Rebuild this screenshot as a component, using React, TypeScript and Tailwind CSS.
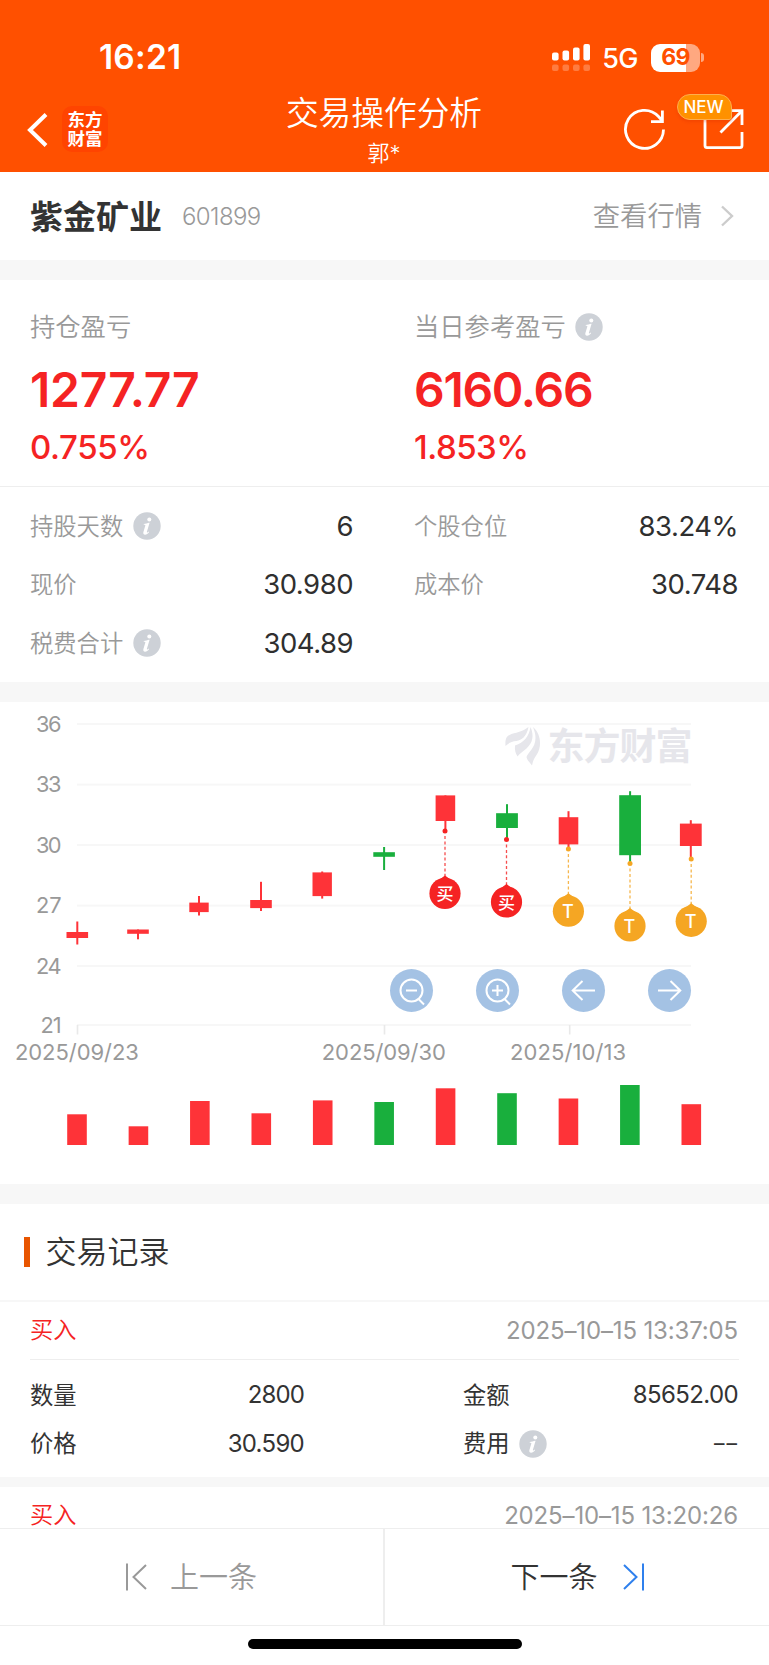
import type { ReactNode } from 'react';

const RED = '#fe3338';
const GREEN = '#19af3d';

type Candle = { x: number; w: number; hi: number; lo: number; top: number; bot: number; up: boolean; vol: number };

const candles: Candle[] = [
  { x: 77.3, w: 21.6, hi: 921.5, lo: 944.5, top: 932, bot: 938, up: true, vol: 1114.3 },
  { x: 138, w: 21.6, hi: 929.5, lo: 939.3, top: 929.5, bot: 933.8, up: true, vol: 1126.3 },
  { x: 199, w: 19.4, hi: 896, lo: 915.5, top: 902.6, bot: 912.1, up: true, vol: 1101 },
  { x: 261, w: 21.6, hi: 881.8, lo: 911, top: 900, bot: 908.1, up: true, vol: 1113.3 },
  { x: 322.2, w: 19.4, hi: 871.5, lo: 898.6, top: 872.4, bot: 896.1, up: true, vol: 1100.4 },
  { x: 384.1, w: 21.6, hi: 847, lo: 870, top: 852.2, bot: 856.8, up: false, vol: 1102 },
  { x: 445.4, w: 19.6, hi: 795.4, lo: 830, top: 795.4, bot: 821, up: true, vol: 1088.3 },
  { x: 507, w: 21.8, hi: 804.2, lo: 838, top: 813.2, bot: 828, up: false, vol: 1093.2 },
  { x: 568.5, w: 19.6, hi: 811.2, lo: 847, top: 817.2, bot: 844.4, up: true, vol: 1098.5 },
  { x: 630.1, w: 21.8, hi: 791.2, lo: 862, top: 795.2, bot: 855.2, up: false, vol: 1085 },
  { x: 690.8, w: 21.8, hi: 820.2, lo: 857, top: 823.6, bot: 846, up: true, vol: 1104.2 },
];

const grid: [string, number][] = [['36', 724], ['33', 784.6], ['30', 845], ['27', 905.6], ['24', 966], ['21', 1025]];
const dates: [string, number, number, number][] = [
  ['2025/09/23', 76.9, 77.5, 124],
  ['2025/09/30', 383.8, 384.5, 124],
  ['2025/10/13', 568, 569.7, 116],
];
const pins: [string, number, number, number][] = [
  ['买', 445, 831, 893.4],
  ['买', 506.5, 839.5, 902],
  ['T', 568.4, 849, 911.2],
  ['T', 630, 863.6, 926],
  ['T', 691.2, 859, 921.3],
];

function Info() {
  return (
    <svg className="size-[28px] shrink-0" viewBox="0 0 28 28">
      <circle cx="14" cy="14" r="13.7" fill="#cdd1d7" />
      <circle cx="16.300" cy="7.500" r="2" fill="#fff" />
      <path d="M10.800 12c1.900-.2 3.500-.7 5-1.200h.8l-2.700 9c-.2.900.2 1 .9.400l1-.8.400.500c-1.400 1.800-2.700 2.800-4.100 2.800-1.500 0-2.100-1-1.700-2.600l1.900-6.300c.2-.7-.1-1-1.600-1z" fill="#fff" />
    </svg>
  );
}

function Metric({ label, value, info }: { label: string; value: string; info?: boolean }) {
  return (
    <div className="flex h-full items-center pl-[30px] pr-[31px]">
      <span className="pt-[1px] text-[23.3px] font-[350] text-[#999]">{label}</span>
      {info && <span className="ml-[10px] flex"><Info /></span>}
      <span className="ml-auto pt-[1px] text-[27.5px] font-[380] tracking-[-0.500px] text-[#2f2f2f]">{value}</span>
    </div>
  );
}

function RoundButton({ children }: { children: ReactNode }) {
  return (
    <button className="size-[43px] rounded-full bg-[#a4c2e4]">
      <svg viewBox="0 0 43 43" className="size-[43px]" fill="none" stroke="#fff" strokeWidth="2">{children}</svg>
    </button>
  );
}

function RecordHead({ time }: { time: string }) {
  return (
    <div className="flex h-[57px] items-center justify-between">
      <span className="pt-[1px] text-[23.200px] font-[350] text-[#f52323]">买入</span>
      <span className="pr-[1px] pt-[1px] text-[24px] font-[380] tracking-[-0.150px] text-[#999]">{time}</span>
    </div>
  );
}

function Chart() {
  return (
    <div className="relative h-[482px]">
      <svg className="block h-[482px] w-[769px]" viewBox="0 702 769 482">
        {grid.map(([t, y]) => (
          <g key={t}>
            <rect x="77" y={y - 1} width="614" height="2" fill="#f7f7f7" />
            <text x="61.500" y={y + 7.8} textAnchor="end" fontSize="21.800" fontWeight="380" textLength={t === '21' ? 21 : 25.5} fill="#999">{t}</text>
          </g>
        ))}
        {dates.map(([t, x, tick, w]) => (
          <g key={t}>
            <rect x={tick - 0.8} y="1025" width="1.6" height="9.500" fill="#e9e9e9" />
            <text x={x} y="1060.200" textAnchor="middle" fontSize="22" fontWeight="380" textLength={w} fill="#999">{t}</text>
          </g>
        ))}
        <g fill="#e6e6eb">
          <path d="M505.500 746c-.5-8 1-10 6-12 7-2 12-3 17-7-2 10-7 13-12 14-5 .5-8 2-11 5z" />
          <path d="M517.500 756.500c-2-3-3-7-2.500-11 9-3 14-9 15.500-18.500 4 9 2 16-4 21.500-4 3.500-7 5-9 8z" />
          <path d="M532 765.500c-2-3-5-5-5.500-8.500 1-4 9-9 9-19 0-4-1-7-2.500-11 9 8 8.500 21 3.500 28-2.500 3.500-3.500 6-4.500 10.500z" />
          <text x="547.500" y="759.800" fontSize="37" fontWeight="700" textLength="145">东方财富</text>
        </g>
        {candles.map((c, i) => {
          const f = c.up ? RED : GREEN;
          return (
            <g key={i} fill={f}>
              <rect x={c.x - 1} y={c.hi} width="2" height={c.lo - c.hi} />
              <rect x={c.x - c.w / 2} y={c.top} width={c.w} height={c.bot - c.top} />
              <rect x={67.2 + i * 61.43} y={c.vol} width="19.600" height={1145 - c.vol} />
            </g>
          );
        })}
        {pins.map(([t, x, y, cy]) => {
          const f = t === 'T' ? '#f5a623' : '#f52323';
          return (
            <g key={x}>
              <circle cx={x} cy={y} r="2.500" fill={f} />
              <path d={`M${x} ${y + 5}V${cy - 17}`} stroke={f} strokeWidth="1.300" strokeDasharray="3 2.400" opacity=".8" />
              <path d={`M${x} ${cy - 18}q4 3.500 11 7h-22q7-3.500 11-7z`} fill={f} />
              <circle cx={x} cy={cy} r="15.600" fill={f} />
              <text x={x - (t === 'T' ? 0.6 : 0)} y={cy + (t === 'T' ? 6.8 : 6.8)} textAnchor="middle" fontSize={t === 'T' ? 18 : 17} fontWeight="500" fill="#fff">{t}</text>
            </g>
          );
        })}
      </svg>
      <div className="absolute left-[390px] top-[267px] flex gap-[43px]">
        <RoundButton><circle cx="21.500" cy="21.500" r="11" /><path d="M16 21.500h11M28.500 30l5.500 5.500" /></RoundButton>
        <RoundButton><circle cx="21.500" cy="21.500" r="11" /><path d="M16 21.500h11M21.500 16v11M28.500 30l5.500 5.500" /></RoundButton>
        <RoundButton><path d="M33 21.500H11M20.500 12l-9.800 9.500 9.800 9.500" /></RoundButton>
        <RoundButton><path d="M10 21.500h22M22.500 12l9.800 9.500-9.800 9.500" /></RoundButton>
      </div>
    </div>
  );
}

export default function App() {
  return (
    <div className="flex h-[1665px] w-[769px] flex-col overflow-hidden bg-white font-['Inter','Noto_Sans_CJK_SC',sans-serif] leading-none whitespace-nowrap">
      <header className="h-[172px] shrink-0 bg-[#ff5000] text-white">
        <div className="flex h-[86px] items-center pl-[99px] pr-[65px] pt-[29px]">
          <span className="text-[33.500px] font-semibold tracking-[0.200px]">16:21</span>
          <svg className="ml-auto h-[28px] w-[38px]" viewBox="0 0 38 28" fill="#fff">
            <rect y="8.500" width="6.600" height="8" rx="2" />
            <rect x="10.500" y="6.500" width="6.600" height="10" rx="2" />
            <rect x="21" y="3.500" width="6.600" height="13" rx="2" />
            <rect x="31.400" width="6.600" height="16.500" rx="2" />
            <g opacity=".25">
              <rect y="20.500" width="6.600" height="6.600" rx="2" />
              <rect x="10.500" y="20.500" width="6.600" height="6.600" rx="2" />
              <rect x="21" y="20.500" width="6.600" height="6.600" rx="2" />
              <rect x="31.400" y="20.500" width="6.600" height="6.600" rx="2" />
            </g>
          </svg>
          <span className="ml-[12px] pt-[2px] text-[27px] font-medium tracking-[-0.5px]">5G</span>
          <span className="ml-[13px] flex h-[28px] w-[49px] items-center justify-center rounded-[9px] bg-[linear-gradient(90deg,#fff_71%,#ffa880_71%)] text-[23px] font-bold tracking-[-0.800px] text-[#ff5000]">69</span>
          <span className="ml-[1px] h-[9px] w-[3px] rounded-r-full bg-[#ffa880]" />
        </div>
        <div className="flex h-[86px]">
          <div className="flex w-[256px] pl-[27px] pt-[20px]">
            <svg className="mt-[6px] h-[36px] w-[22px]" viewBox="0 0 22 36" fill="none" stroke="#fff" strokeWidth="4"><path d="M19 2.500 3 18l16 15.500" /></svg>
            <div className="ml-[13px] flex size-[46px] flex-col items-center justify-center gap-[1.500px] rounded-[10px] bg-[#ff4400] text-[17.500px] font-bold"><span>东方</span><span>财富</span></div>
          </div>
          <div className="flex w-[256px] flex-col items-center">
            <h1 className="mt-[11px] text-[32.700px] font-[350]">交易操作分析</h1>
            <span className="mt-[12px] text-[22px] font-[350]">郭*</span>
          </div>
          <div className="relative flex flex-1 pl-[110px] pt-[21px]">
            <svg className="h-[44px] w-[48px]" viewBox="0 0 48 44" fill="none" stroke="#fff" strokeWidth="2.800"><path d="M41.500 22.500A19 19 0 1 1 36.500 9.500L40 13.500M40.400 3.500v11.200H29" /></svg>
            <svg className="ml-[30px] h-[44px] w-[44px]" viewBox="0 0 44 44" fill="none" stroke="#fff" strokeWidth="2.800"><path d="M5 8v30.500q0 2.100 2 2.100h33q2 0 2-2.100V25M32 3.700h10V18M42 3.700 20.500 25.500" /></svg>
            <span className="absolute left-[165px] top-[8px] flex h-[25.500px] w-[55px] items-center justify-center rounded-[13px] rounded-br-[3px] border border-[#ffae4d] bg-[#ff9100] pr-[2px] pt-[2px] text-[17px] font-medium shadow-[0_2px_3px_rgba(220,50,0,0.300)]">NEW</span>
          </div>
        </div>
      </header>

      <div className="flex h-[88px] shrink-0 items-center pl-[30px] pr-[32px]">
        <span className="pt-[2px] text-[33px] font-bold text-[#333]">紫金矿业</span>
        <span className="ml-[20px] pt-[1px] text-[24px] font-light tracking-[-0.600px] text-[#999]">601899</span>
        <span className="ml-auto pt-[2px] text-[27.300px] font-[350] text-[#999]">查看行情</span>
        <svg className="ml-[17px] h-[24px] w-[18px]" viewBox="0 0 18 24" fill="none" stroke="#ccc" strokeWidth="2.400"><path d="M3 2.500 13 12 3 21.500" /></svg>
      </div>
      <div className="h-[20px] shrink-0 bg-[#f7f7f7]" />

      <section className="grid h-[207px] shrink-0 grid-cols-[384px_385px] border-b border-[#eee]">
        <div className="pl-[30px] pt-[33px]">
          <div className="flex h-[28px] items-center text-[25.300px] font-[350] text-[#999]">持仓盈亏</div>
          <div className="mt-[25px] text-[48px] font-semibold tracking-[-0.200px] text-[#f52323]">1277.77</div>
          <div className="mt-[17px] text-[33px] font-medium tracking-[-0.400px] text-[#f52323]">0.755%</div>
        </div>
        <div className="pl-[30px] pt-[33px]">
          <div className="flex h-[28px] items-center text-[25.300px] font-[350] text-[#999]"><span className="mr-[9px]">当日参考盈亏</span><Info /></div>
          <div className="mt-[25px] text-[48px] font-semibold tracking-[-1.300px] text-[#f52323]">6160.66</div>
          <div className="mt-[17px] text-[33px] font-medium tracking-[-0.500px] text-[#f52323]">1.853%</div>
        </div>
      </section>

      <section className="grid h-[195px] shrink-0 grid-cols-[384px_385px] grid-rows-[58.500px_58.500px_58.500px] pt-[9.500px]">
        <Metric label="持股天数" value="6" info />
        <Metric label="个股仓位" value="83.24%" />
        <Metric label="现价" value="30.980" />
        <Metric label="成本价" value="30.748" />
        <Metric label="税费合计" value="304.89" info />
      </section>
      <div className="h-[20px] shrink-0 bg-[#f7f7f7]" />

      <Chart />
      <div className="h-[20px] shrink-0 bg-[#f7f7f7]" />

      <div className="flex h-[98px] shrink-0 items-center border-b-2 border-[#f7f7f7] pl-[23.500px]">
        <span className="h-[30px] w-[6px] bg-[#e85500]" />
        <h2 className="ml-[16px] pb-[2px] text-[31px] font-[350] text-[#333]">交易记录</h2>
      </div>
      <section className="h-[175px] shrink-0 px-[30px]">
        <RecordHead time="2025–10–15 13:37:05" />
        <div className="grid grid-cols-[274px_1fr] border-t border-[#eee] pt-[11px] text-[24px] font-[380] text-[#333]">
          <div className="flex h-[48.500px] items-center justify-between"><span className="text-[23.300px]">数量</span><span className="tracking-[-0.900px]">2800</span></div>
          <div className="flex h-[48.500px] items-center justify-between pl-[159px] pr-[1px]"><span className="text-[23.300px]">金额</span><span className="tracking-[-0.600px]">85652.00</span></div>
          <div className="flex h-[48.500px] items-center justify-between"><span className="text-[23.300px]">价格</span><span className="tracking-[-0.700px]">30.590</span></div>
          <div className="flex h-[48.500px] items-center pl-[159px]"><span className="mr-[9px] text-[23.300px]">费用</span><Info /><span className="ml-auto text-[21px] font-normal tracking-[2px]">––</span></div>
        </div>
      </section>
      <div className="h-[10px] shrink-0 bg-[#f7f7f7]" />
      <section className="h-[41px] shrink-0 px-[30px]"><RecordHead time="2025–10–15 13:20:26" /></section>

      <nav className="grid h-[98px] shrink-0 grid-cols-2 border-y border-[#eee] text-[29px] font-[350]">
        <button className="flex items-center border-r-2 border-[#eee] pl-[125px] text-[#999]">
          <svg className="h-[28px] w-[22px]" viewBox="0 0 22 28" fill="none" stroke="currentColor" strokeWidth="2"><path d="M2 0.500v27M21 2 8.500 14 21 26" /></svg>
          <span className="ml-[23px]">上一条</span>
        </button>
        <button className="flex items-center pl-[126px] text-[#333]">
          <span>下一条</span>
          <svg className="ml-[25px] h-[28px] w-[22px]" viewBox="0 0 22 28" fill="none" stroke="#2f80ed" strokeWidth="2"><path d="M20 0.500v27M1 2l12.500 12L1 26" /></svg>
        </button>
      </nav>
      <div className="flex flex-1 items-start justify-center pt-[13px]"><span className="h-[10px] w-[274px] rounded-full bg-black" /></div>
    </div>
  );
}
